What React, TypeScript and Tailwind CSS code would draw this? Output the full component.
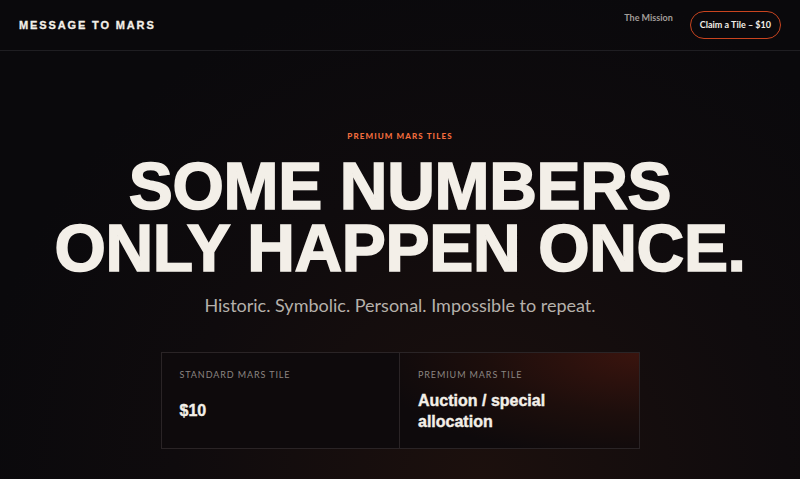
import React from 'react';

const sans = "font-['Liberation_Sans',Arial,sans-serif]";
const soft = "font-['Lato','Noto_Sans',sans-serif]";

export default function App() {
  return (
    <div className="min-h-[479px] w-full bg-[radial-gradient(ellipse_at_60%_100%,#1c100d_0%,#0f0b0d_45%,#0a090c_75%)] text-[#f3efe8]">
      {/* Nav */}
      <header className="flex h-[51px] items-center justify-between border-b border-[#1f1e22] px-[19px]">
        <div className={`${sans} text-[11px] font-black tracking-[0.17em] [-webkit-text-stroke:0.3px_#f3efe8]`}>
          MESSAGE TO MARS
        </div>
        <nav className={`${soft} flex items-center gap-[17px]`}>
          <a className="-mt-[14px] text-[9px] font-bold text-[#a19d99]">The Mission</a>
          <button className="rounded-full border-[1.5px] border-[#c9441f] px-[9px] py-[6px] text-[9px] font-bold text-[#f3efe8]">
            Claim a Tile – $10
          </button>
        </nav>
      </header>

      {/* Hero */}
      <main className="flex flex-col items-center pt-[79px]">
        <p className={`${soft} text-[8px] font-black tracking-[0.14em] text-[#f26d3d]`}>
          PREMIUM MARS TILES
        </p>
        <h1
          className={`${sans} mt-[13px] text-center text-[66px] font-bold leading-[62px] tracking-[-0.005em] [-webkit-text-stroke:1.6px_#f3efe8]`}
        >
          SOME NUMBERS
          <br />
          ONLY HAPPEN ONCE.
        </h1>
        <p className={`${soft} mt-[13px] text-[18px] text-[#b6b1ab]`}>
          Historic. Symbolic. Personal. Impossible to repeat.
        </p>

        <div className="mt-[33px] grid h-[97px] w-[479px] grid-cols-2 border border-[#2a2426]">
          <div className="border-r border-[#2a2426] bg-[#0e0a0c] px-[18px] pt-[15px]">
            <div className={`${soft} text-[9px] tracking-[0.1em] text-[#8b8581]`}>STANDARD MARS TILE</div>
            <div className={`${sans} mt-[17px] text-[16px] font-bold [-webkit-text-stroke:0.4px_#f3efe8]`}>$10</div>
          </div>
          <div className="bg-[radial-gradient(ellipse_at_100%_0%,#3a140e_0%,#1d0e0c_45%,#0e0a0c_80%)] px-[18px] pt-[15px]">
            <div className={`${soft} text-[9px] tracking-[0.1em] text-[#8b8581]`}>PREMIUM MARS TILE</div>
            <div className={`${sans} mt-[8px] text-[16px] font-bold leading-[21px] [-webkit-text-stroke:0.4px_#f3efe8]`}>
              Auction / special
              <br />
              allocation
            </div>
          </div>
        </div>
      </main>
    </div>
  );
}
